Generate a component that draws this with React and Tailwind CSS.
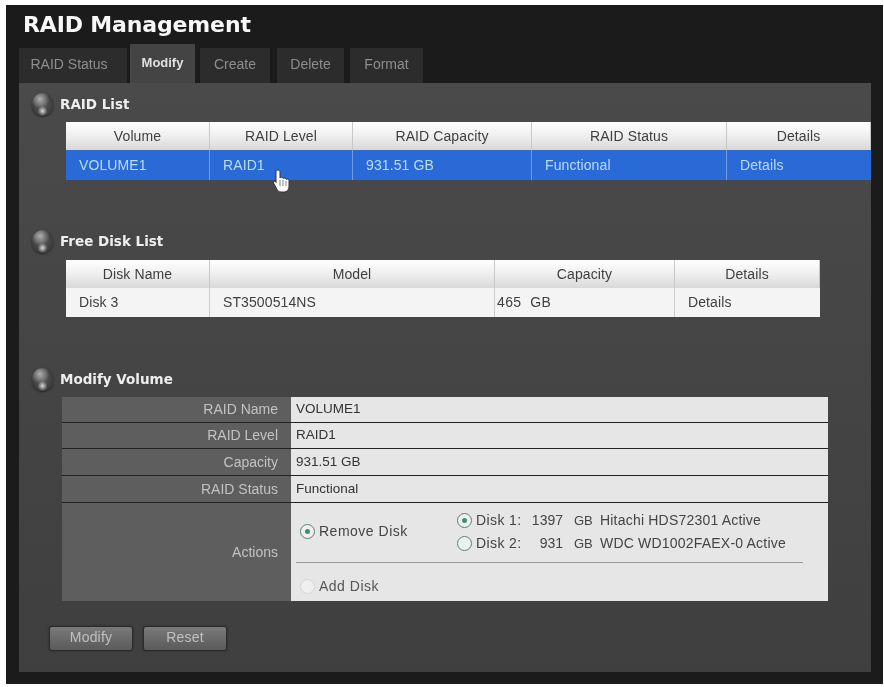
import React from "react";

const sans = "font-['Liberation_Sans',Arial,sans-serif]";

function Sphere() {
  return <span className="w-[21px] h-[23px] rounded-full shrink-0 bg-[radial-gradient(circle_at_50%_78%,#d8d8d8_0%,transparent_24%),radial-gradient(circle_at_38%_26%,#b0b0b0_0%,transparent_45%),radial-gradient(circle,#5a5a5a_0%,#3c3c3c_70%,#6a6a6a_100%)] shadow-[0_1px_2px_#222]" />;
}

function Heading({ children, className = "" }) {
  return (
    <div className={`flex items-center h-6 ml-[13px] gap-[7px] ${className}`}>
      <Sphere />
      <span className="font-['DejaVu_Sans',sans-serif] font-bold text-[13.5px] text-[#eeeeee]">{children}</span>
    </div>
  );
}

function Radio({ on, dim }) {
  return (
    <span className={`w-[15px] h-[15px] rounded-full border flex items-center justify-center shrink-0 ${dim ? "border-[#d4d4d4]" : "border-[#5e7f7b]"} bg-[#eef0ef]`}>
      {on && <span className="w-[5px] h-[5px] rounded-full bg-[#3f8f78]" />}
    </span>
  );
}

function Tab({ children, active, w, className = "" }) {
  return (
    <div className={`flex items-center justify-center pb-[2px] ${w} ${active ? "h-[39px] bg-[#444444] text-[#e0e0e0] font-bold text-[13px]" : "h-[35px] bg-[#2c2c2c] text-[#8e8e8e] text-[14px]"} ${className}`}>
      {children}
    </div>
  );
}

function HeadCell({ children }) {
  return (
    <div className="flex items-center justify-center h-[28px] border-r last:border-r-0 border-[#c8c8c8] bg-gradient-to-b from-[#ffffff] via-[#efefef] to-[#d8d8d8] text-[#3f3f3f] text-[14px] tracking-[0.1px]">
      {children}
    </div>
  );
}

function DataTable({ cols, heads, cells, rowClass, divider, width, className = "mt-1.5" }) {
  return (
    <div className={`grid ${cols} ${width} ml-[47px] ${sans} ${className}`}>
      {heads.map((h) => <HeadCell key={h}>{h}</HeadCell>)}
      {cells.map((c, i) => (
        <div key={i} className={`flex items-center pl-[13px] ${rowClass} border-r last:border-r-0 ${divider} text-[14px] tracking-[0.1px]`}>{c}</div>
      ))}
    </div>
  );
}

function KV({ label, value, h = "h-[26px]" }) {
  return (
    <div className={`grid grid-cols-[229px_537px] ${h} border-b border-[#222222]`}>
      <div className="bg-[#5e5e5e] text-[#c2c2c2] text-[14px] pr-[13px] flex items-center justify-end">{label}</div>
      <div className="bg-[#e6e6e6] text-[#333333] text-[13.5px] pl-[5px] flex items-center">{value}</div>
    </div>
  );
}

function DiskLine({ on, name, size, model }) {
  return (
    <div className="flex items-center h-[23px] text-[#444444] text-[14px]">
      <Radio on={on} />
      <span className="ml-[4px] w-[48px] tracking-[0.4px]">{name}</span>
      <span className="w-[39px] text-right">{size}</span>
      <span className="ml-[11px] w-[26px] text-[13px]">GB</span>
      <span className="tracking-[0.2px]">{model}</span>
    </div>
  );
}

function Btn({ children }) {
  return (
    <button className="w-[84px] h-[25px] pb-[2px] rounded-[3px] border border-[#2a2a2a] bg-gradient-to-b from-[#7a7a7a] to-[#5a5a5a] text-[#c0c0c0] text-[14px] tracking-[0.2px] shadow-[0_0_2px_#222]">
      {children}
    </button>
  );
}

export default function App() {
  return (
    <div className={`w-[884px] h-[687px] bg-white pt-[5px] pl-[6px] relative overflow-hidden blur-[0.4px] ${sans}`}>
      <div className="w-[877px] h-[679px] bg-[#1b1b1b] pl-[13px] flex flex-col">
        <div className="h-[39px] flex items-center pl-1 font-['DejaVu_Sans',sans-serif] font-bold text-[22px] tracking-[-0.15px] text-[#f8f8f8]">RAID Management</div>
        <div className="flex items-end h-[39px]">
          <Tab w="w-[108px]" className="pr-[8px]">RAID Status</Tab>
          <Tab w="w-[65px]" active className="ml-[3px]">Modify</Tab>
          <Tab w="w-[70px]" className="ml-[5px]">Create</Tab>
          <Tab w="w-[67px]" className="ml-[7px]">Delete</Tab>
          <Tab w="w-[73px]" className="ml-[6px]">Format</Tab>
        </div>
        <div className="w-[852px] h-[589px] bg-gradient-to-b from-[#4a4a4a] to-[#3f3f3f] pt-[9px]">
          <Heading>RAID List</Heading>
          <DataTable
            width="w-[805px]"
            cols="grid-cols-[144px_143px_179px_195px_144px]"
            heads={["Volume", "RAID Level", "RAID Capacity", "RAID Status", "Details"]}
            cells={["VOLUME1", "RAID1", "931.51 GB", "Functional", "Details"]}
            rowClass="h-[30px] bg-[#2a6ad6] text-[#bcdcf2]"
            divider="border-[#6f9fe0]"
          />
          <Heading className="mt-[49px]">Free Disk List</Heading>
          <DataTable
            width="w-[754px]"
            className="mt-[7px]"
            cols="grid-cols-[144px_285px_180px_145px]"
            heads={["Disk Name", "Model", "Capacity", "Details"]}
            cells={[
              "Disk 3",
              "ST3500514NS",
              <span className="-ml-[11px] whitespace-pre tracking-[0.4px]">465  GB</span>,
              "Details",
            ]}
            rowClass="h-[29px] bg-[#f4f4f4] text-[#3f3f3f]"
            divider="border-[#cccccc]"
          />
          <Heading className="mt-[50px]">Modify Volume</Heading>
          <div className="ml-[43px] w-[766px] mt-1.5">
            <KV label="RAID Name" value="VOLUME1" />
            <KV label="RAID Level" value="RAID1" />
            <KV label="Capacity" value="931.51 GB" h="h-[27px]" />
            <KV label="RAID Status" value="Functional" h="h-[27px]" />
            <div className="grid grid-cols-[229px_537px] h-[98px]">
              <div className="bg-[#5e5e5e] text-[#c2c2c2] text-[14px] pr-[13px] flex items-center justify-end">Actions</div>
              <div className="bg-[#e6e6e6] pl-[5px] flex flex-col">
                <div className="h-[60px] w-[507px] border-b border-[#9a9a9a] flex">
                  <div className="flex items-center gap-[4px] w-[161px] pl-[4px] pb-[2px] text-[#444444] text-[14px] tracking-[0.5px]">
                    <Radio on />
                    <span>Remove Disk</span>
                  </div>
                  <div className="pt-[6px]">
                    <DiskLine on name="Disk 1:" size="1397" model="Hitachi HDS72301 Active" />
                    <DiskLine name="Disk 2:" size="931" model="WDC WD1002FAEX-0 Active" />
                  </div>
                </div>
                <div className="flex items-center gap-[4px] pl-[4px] pt-[9px] flex-1 text-[#555555] text-[14px] tracking-[0.5px]">
                  <Radio dim />
                  <span>Add Disk</span>
                </div>
              </div>
            </div>
          </div>
          <div className="flex gap-[10px] ml-[30px] mt-[25px]">
            <Btn>Modify</Btn>
            <Btn>Reset</Btn>
          </div>
        </div>
      </div>
      <svg className="absolute left-[272px] top-[168px]" width="20" height="26" viewBox="0 0 20 26">
        <path d="M6 2c1.200 0 2 .8 2 2v6c.4-1 3-1 3.200.6.500-1 2.800-.8 3 .8.600-.8 2.800-.4 2.800 1.200v5.400c0 3.500-2 6-5 6H9c-2 0-3.200-1-4.200-3L1.500 15c-.7-1.400 1.300-2.600 2.300-1.300L4 14.500V4c0-1.200.8-2 2-2z" fill="#ffffff" stroke="#333333" strokeWidth="1" strokeLinejoin="round" />
        <path d="M8 12v6M11 12v6M14 13v5" stroke="#666666" strokeWidth="0.8" />
      </svg>
    </div>
  );
}
